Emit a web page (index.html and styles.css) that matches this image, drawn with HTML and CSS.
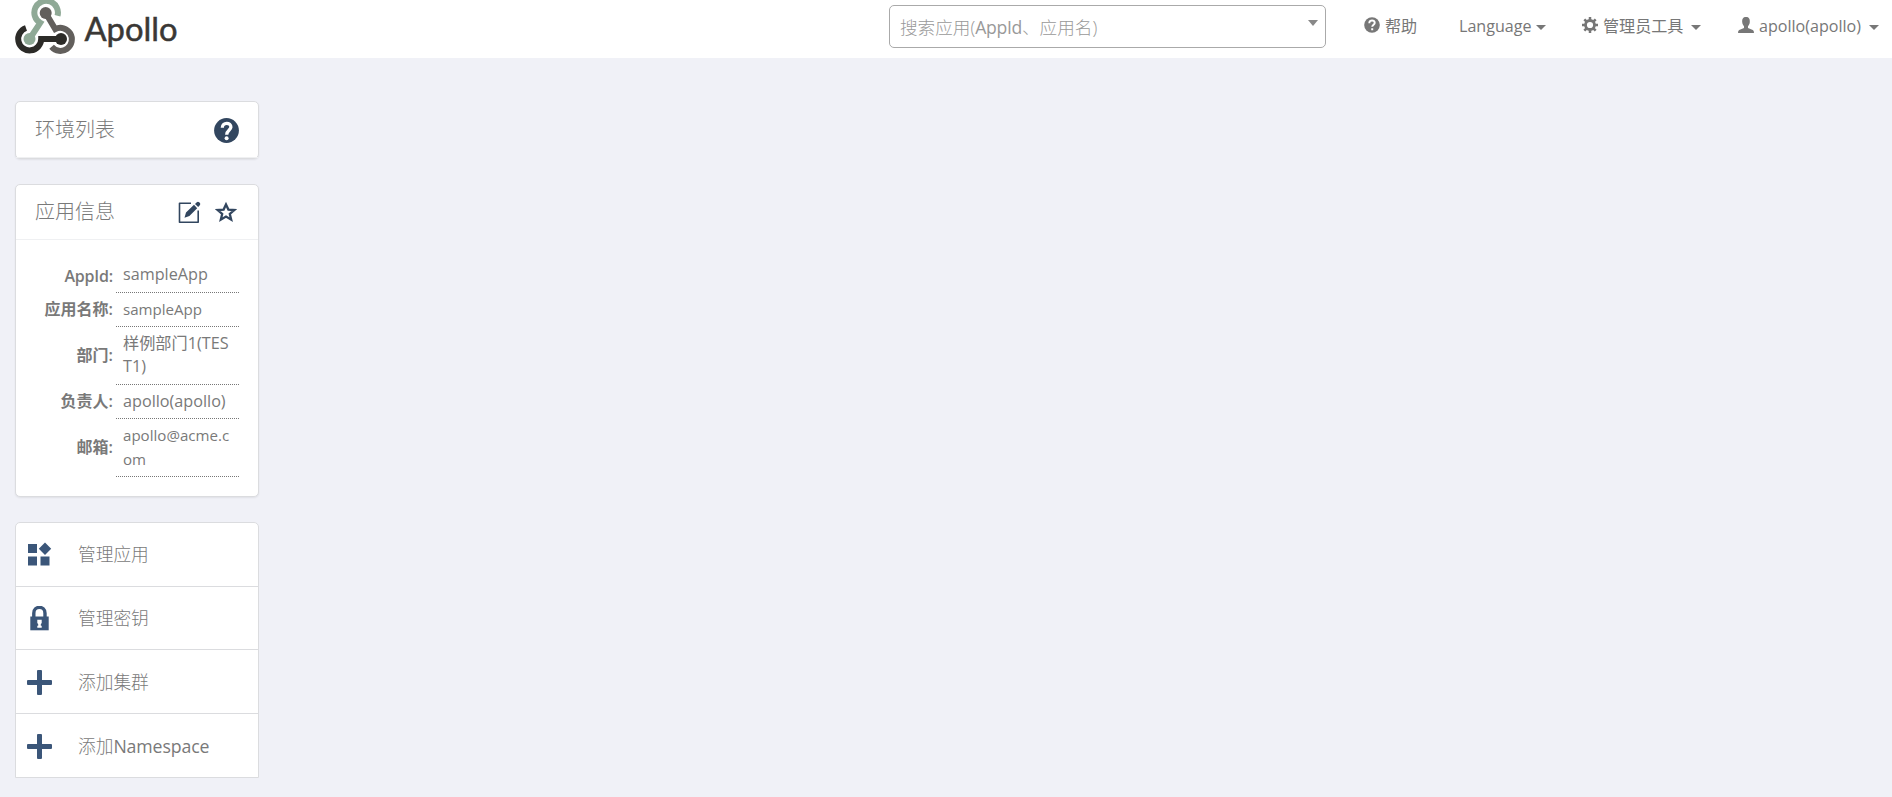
FILE: index.html
```html
<!DOCTYPE html>
<html lang="zh-CN">
<head>
<meta charset="utf-8">
<title>Apollo</title>
<link rel="stylesheet" href="styles.css">
</head>
<body>
<nav class="navbar">
  <svg class="logo" width="180" height="58" viewBox="0 0 180 58" fill="none">
    <g stroke-width="6">
      <path d="M26 28A11.5 11.5 0 1 0 41.2 39H61" stroke="#2c2b28"/>
      <path d="M57.5 15.8A11.8 11.8 0 1 0 40.2 22.8L29.5 39" stroke="#8fa996"/>
      <path d="M45.7 13L55.2 29.1A11.5 11.5 0 1 1 51.6 46.8" stroke="#625f5c"/>
    </g>
    <circle cx="29.5" cy="39" r="6" fill="#8fa996"/>
    <circle cx="61" cy="39" r="6" fill="#2c2b28"/>
    <circle cx="45.7" cy="13" r="6" fill="#625f5c"/>
    <text class="logo-text" x="84.5" y="41" textLength="93" lengthAdjust="spacingAndGlyphs">Apollo</text>
  </svg>
  <div class="search"><span>搜索应用(<b>AppId</b>、应用名)</span><i class="select-arrow"></i></div>
  <div class="nav-item help">
    <svg width="16" height="16" viewBox="0 0 16 16"><circle cx="8" cy="8" r="7.8" fill="#777"/><path d="M5.3 6.2C5.3 2.4 10.9 2.7 10.7 6C10.6 7.7 8.2 7.8 8.2 9.8M8.2 11.2V13.2" stroke="#fff" stroke-width="2" fill="none"/></svg>
    <span>帮助</span>
  </div>
  <div class="nav-item language"><span>Language</span><i class="caret"></i></div>
  <div class="nav-item tools">
    <svg width="16" height="16" viewBox="0 0 16 16" fill="none" stroke="#777"><circle cx="8" cy="8" r="4.5" stroke-width="2.8"/><path d="M8 0V3M8 13V16M0 8H3M13 8H16M2.3 2.3L4.5 4.5M11.5 11.5L13.7 13.7M2.3 13.7L4.5 11.5M11.5 4.5L13.7 2.3" stroke-width="2.5"/></svg>
    <span>管理员工具</span><i class="caret"></i>
  </div>
  <div class="nav-item user">
    <svg width="16" height="16" viewBox="0 0 16 16" fill="#777"><path d="M8 0C5 0 4 2 4.2 5C4.3 7.2 5.3 8.3 6 9.2V11L1.2 13Q0 13.6 0 16H16Q16 13.6 14.8 13L10 11V9.2C10.7 8.3 11.7 7.2 11.8 5C12 2 11 0 8 0Z"/></svg>
    <span>apollo(apollo)</span><i class="caret"></i>
  </div>
</nav>
<main class="sidebar">
  <section class="panel env">
    <header class="panel-head"><h2>环境列表</h2>
      <svg class="help-icon" width="25" height="25" viewBox="0 0 25 25"><circle cx="12.5" cy="12.5" r="12.4" fill="#32465f"/><path d="M8.3 9.8C8.2 3.8 17.2 4 16.9 9.2C16.7 12.4 12.7 12.3 12.7 16.8" stroke="#fff" stroke-width="3.3" fill="none"/><circle cx="12.6" cy="20.3" r="2" fill="#fff"/></svg>
    </header>
  </section>
  <section class="panel info">
    <header class="panel-head"><h2>应用信息</h2>
      <svg class="edit-icon" width="23" height="23" viewBox="0 0 23 23"><path d="M13 2.3H1.5V21.2H20.2V9.5" stroke="#32465f" stroke-width="1.6" stroke-linejoin="round" fill="none"/><path d="M6.5 16.8L8 11.6L16 3.8L19.2 7.2L11.4 15ZM17 2.9L18.8 1.2Q20 .1 21.2 1.3L21.9 2.1Q22.8 3.1 21.8 4.3L20.2 6.1Z" fill="#32465f"/></svg>
      <svg class="star-icon" width="22" height="22" viewBox="0 0 22 22"><path d="M11 3.4L13.4 8.6L19.3 9L14.8 12.9L16.2 18.7L11 15.6L5.8 18.7L7.2 12.9L2.7 9L8.6 8.6Z" fill="none" stroke="#32465f" stroke-width="2.3"/></svg>
    </header>
    <dl class="details">
      <dt class="first">AppId:</dt><dd class="first">sampleApp</dd>
      <dt>应用名称:</dt><dd class="small">sampleApp</dd>
      <dt>部门:</dt><dd>样例部门1(TES<br>T1)</dd>
      <dt>负责人:</dt><dd>apollo(apollo)</dd>
      <dt>邮箱:</dt><dd class="small mail">apollo@acme.c<br>om</dd>
    </dl>
  </section>
  <ul class="panel menu">
    <li><svg width="25" height="25" viewBox="0 0 25 25" fill="#3b5679"><path d="M1 2H10V11H1ZM1 14.5H10V23.5H1ZM13.5 14.5H22.5V23.5H13.5ZM18 .6L24.2 6.8L18 13L11.8 6.8Z"/></svg><span>管理应用</span></li>
    <li><svg width="25" height="25" viewBox="0 0 25 25"><path d="M6.8 12V7.2C6.8-.6 18-.6 18 7.2V12" fill="none" stroke="#3b5679" stroke-width="3.4"/><path d="M3.3 10.5H21.7V24.3H3.3Z" fill="#3b5679"/><path d="M10.3 13.7H14.7V17L13.8 18.2V19.8H14.7V21.7H10.3V19.8H11.2V18.2L10.3 17Z" fill="#fff"/></svg><span>管理密钥</span></li>
    <li><svg width="25" height="25" viewBox="0 0 25 25"><path d="M1 10H10V1Q10 0 11 0H14Q15 0 15 1V10H24Q25 10 25 11V14Q25 15 24 15H15V24Q15 25 14 25H11Q10 25 10 24V15H1Q0 15 0 14V11Q0 10 1 10Z" fill="#3b5679"/></svg><span>添加集群</span></li>
    <li><svg width="25" height="25" viewBox="0 0 25 25"><path d="M1 10H10V1Q10 0 11 0H14Q15 0 15 1V10H24Q25 10 25 11V14Q25 15 24 15H15V24Q15 25 14 25H11Q10 25 10 24V15H1Q0 15 0 14V11Q0 10 1 10Z" fill="#3b5679"/></svg><span>添加<b>Namespace</b></span></li>
  </ul>
</main>
</body>
</html>
```
FILE: styles.css
```css
* { box-sizing: border-box; }
body {
  margin: 0;
  height: 797px;
  overflow: hidden;
  background: #f0f1f7;
  color: #797979;
  font: 16px/23px "Open Sans", "Noto Sans CJK SC", sans-serif;
}
svg { display: block; flex: none; }
span { white-space: nowrap; }
b { font-weight: 400; }
.navbar { display: flex; height: 58px; background: #fff; color: #777; }
.logo-text { font: 400 32px Lato, sans-serif; fill: #3a3835; stroke: #3a3835; stroke-width: .5px; }
.search {
  display: flex;
  justify-content: space-between;
  width: 437px;
  height: 43px;
  margin: 5px 0 0 709px;
  padding: 10px 7px 0 10px;
  border: 1px solid #aaa;
  border-radius: 5px;
  color: #999;
  font-size: 17.6px;
  font-weight: 300;
}
.search b { letter-spacing: -.3px; }
.select-arrow { height: 0; margin-top: 4px; border: 5px solid transparent; border-top: 6px solid #888; border-bottom: 0; }
.nav-item { display: flex; height: 23px; margin-top: 15px; font-size: 16.1px; }
.nav-item svg { margin: 2px 5px 0 0; }
.help { width: 95px; margin-left: 38px; }
.language { width: 123px; }
.tools { width: 156px; }
.caret { height: 0; margin: 10px 0 0 8px; border: 5px solid transparent; border-top-color: #777; border-bottom: 0; }
.language .caret { margin-left: 4px; }
.sidebar { width: 244px; margin: 43px 0 0 15px; }
.panel { margin: 0 0 25px; background: #fff; border: 1px solid #dbdcdf; border-radius: 5px; box-shadow: 0 1px 2px rgba(0,0,0,.07); }
.env { height: 58px; }
.info { height: 313px; }
.panel-head { display: flex; height: 55px; padding: 0 19px; border-bottom: 1px solid #eff0f2; }
.env .panel-head { height: 56px; }
.panel-head h2 { margin: 14px auto 0 0; font-size: 20px; line-height: 27px; font-weight: 300; }
.info h2 { margin-top: 13px; }
.help-icon { margin-top: 16px; }
.edit-icon { margin: 16px 14px 0 0; }
.star-icon { margin: 16px 2px 0 0; }
.details { display: grid; grid-template-columns: 78px 123px; grid-template-rows: 34px 34px 58px 34px 58px; column-gap: 3px; margin: 19px 0 0 19px; }
dt { align-self: center; padding-bottom: 2px; text-align: right; font-weight: 600; white-space: nowrap; }
dt.first { padding: 0; letter-spacing: -.2px; }
dd { margin: 0; padding: 5px 0 0 7px; border-bottom: 1px dotted #777; font-size: 16.2px; white-space: nowrap; }
dd.first { padding-top: 4px; }
dd.small { font-size: 15.1px; }
dd.mail { padding-top: 4px; line-height: 24px; }
.menu { height: 256px; margin-bottom: 0; padding: 0; list-style: none; border-radius: 5px 5px 0 0; box-shadow: none; }
.menu li { display: flex; align-items: center; height: 63.67px; padding: 1px 0 0 11px; border-bottom: 1px solid #dbdcdf; gap: 26px; font-size: 17.7px; font-weight: 300; }
.menu b { letter-spacing: -.1px; }
.menu li:last-child { border-bottom: 0; }
```
